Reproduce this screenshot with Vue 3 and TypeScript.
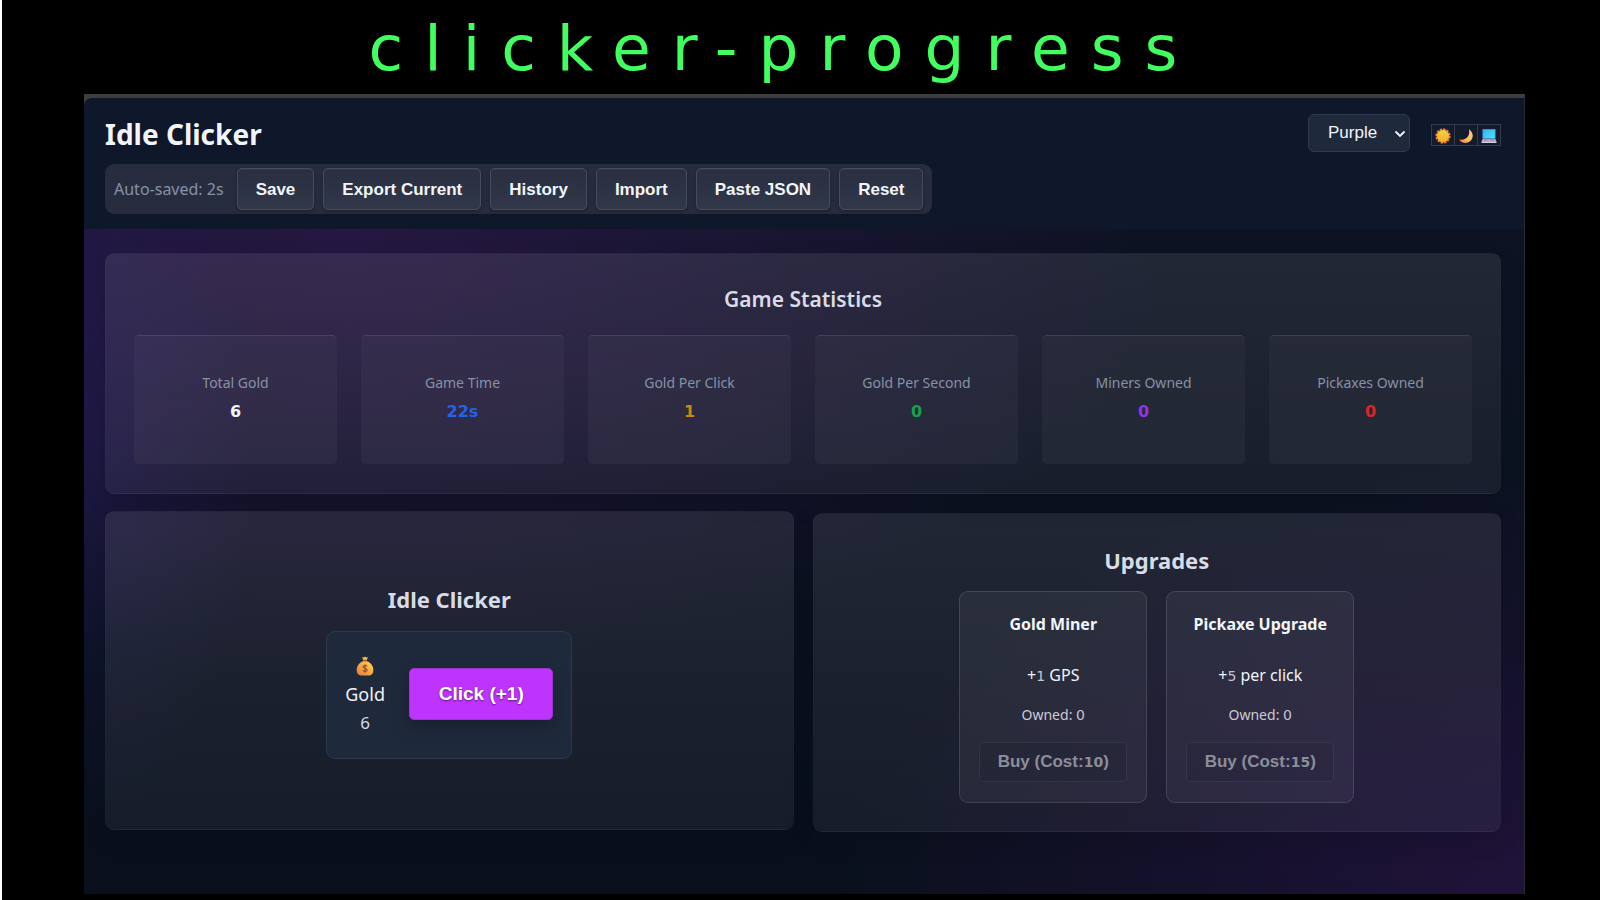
<script setup lang="ts">
import { ref } from 'vue'

interface Stat {
  label: string
  value: string
  tone: string
}

interface Upgrade {
  name: string
  amount: number
  unit: string
  owned: number
  cost: number
}

const gold = ref(6)
const perClick = ref(1)
const accent = ref('Purple')

const actions: string[] = ['Save', 'Export Current', 'History', 'Import', 'Paste JSON', 'Reset']

const stats: Stat[] = [
  { label: 'Total Gold', value: '6', tone: 'white' },
  { label: 'Game Time', value: '22s', tone: 'blue' },
  { label: 'Gold Per Click', value: '1', tone: 'amber' },
  { label: 'Gold Per Second', value: '0', tone: 'green' },
  { label: 'Miners Owned', value: '0', tone: 'purple' },
  { label: 'Pickaxes Owned', value: '0', tone: 'red' },
]

const upgrades: Upgrade[] = [
  { name: 'Gold Miner', amount: 1, unit: 'GPS', owned: 0, cost: 10 },
  { name: 'Pickaxe Upgrade', amount: 5, unit: 'per click', owned: 0, cost: 15 },
]

function collect(): void {
  gold.value += perClick.value
}
</script>

<template>
  <div class="stage">
    <h1 class="banner">clicker-progress</h1>
    <div class="window">
      <header class="top">
        <div class="brand-row">
          <h2 class="brand">Idle Clicker</h2>
          <div class="prefs">
            <div class="select-wrap">
              <select v-model="accent" class="accent" aria-label="Accent colour">
                <option>Purple</option>
                <option>Blue</option>
                <option>Green</option>
              </select>
              <svg class="chevron" viewBox="0 0 12 8" aria-hidden="true">
                <path d="M1.500 1.500 6 6l4.500-4.500" fill="none" stroke="currentColor" stroke-width="1.800" />
              </svg>
            </div>
            <div class="modes">
              <button class="mode" type="button" aria-label="Light">
                <svg viewBox="0 0 18 18" aria-hidden="true">
                  <defs>
                    <linearGradient id="sun" x1="0" y1="0" x2="0" y2="1">
                      <stop offset="0" stop-color="#f9cf45" />
                      <stop offset="1" stop-color="#f2b02e" />
                    </linearGradient>
                  </defs>
                  <circle cx="9" cy="9" r="7.600" fill="none" stroke="#ee8430" stroke-width="2" stroke-dasharray="2.600 1.380" />
                  <circle cx="9" cy="9" r="7.300" fill="#ee8c30" />
                  <circle cx="9" cy="9" r="6.400" fill="url(#sun)" />
                </svg>
              </button>
              <button class="mode" type="button" aria-label="Dark">
                <svg viewBox="0 0 18 18" aria-hidden="true">
                  <defs>
                    <linearGradient id="moon" x1="1" y1="0" x2="0" y2="1">
                      <stop offset="0" stop-color="#ffd57a" />
                      <stop offset="0.600" stop-color="#fbb95c" />
                      <stop offset="1" stop-color="#e9723d" />
                    </linearGradient>
                  </defs>
                  <path d="M12.300 1.500c5.200 3.300 5.600 9.700 1.600 13.200-4 3.500-10.200 2.500-12.700-1.800 4.200 1 8-.4 9.900-3.200 1.700-2.500 2-5.300 1.200-8.200z" fill="url(#moon)" />
                </svg>
              </button>
              <button class="mode" type="button" aria-label="System">
                <svg viewBox="0 0 18 18" aria-hidden="true">
                  <defs>
                    <linearGradient id="screen" x1="0" y1="0" x2="1" y2="1">
                      <stop offset="0" stop-color="#35b4f4" />
                      <stop offset="1" stop-color="#4ee0fb" />
                    </linearGradient>
                  </defs>
                  <rect x="1.500" y="1" width="15" height="11" rx="1" fill="#2b8fdc" />
                  <rect x="2.500" y="2" width="13" height="9.500" fill="url(#screen)" />
                  <path d="M2 12h14l1.500 3.500h-17z" fill="#b9b3c9" />
                  <path d="M3.500 13h11M3 14.300h3.500m5 0H15" stroke="#8b86a0" stroke-width=".8" />
                  <rect x=".5" y="15.300" width="17" height="1.700" rx=".7" fill="#d4cfe2" />
                </svg>
              </button>
            </div>
          </div>
        </div>
        <nav class="toolbar" aria-label="Game data">
          <span class="saved">Auto-saved: 2s</span>
          <button v-for="action in actions" :key="action" class="tool" type="button">{{ action }}</button>
        </nav>
      </header>

      <main class="board">
        <section class="panel stats-panel">
          <h3 class="heading light">Game Statistics</h3>
          <div class="stats">
            <div v-for="stat in stats" :key="stat.label" class="stat">
              <span class="stat-label">{{ stat.label }}</span>
              <span class="stat-value" :class="stat.tone">{{ stat.value }}</span>
            </div>
          </div>
        </section>

        <div class="columns">
          <section class="panel clicker-panel">
            <h3 class="heading">Idle Clicker</h3>
            <div class="clicker">
              <div class="purse">
                <svg class="bag" viewBox="0 0 18 20" aria-hidden="true">
                  <defs>
                    <linearGradient id="bag" x1="1" y1="0" x2="0" y2="1">
                      <stop offset="0" stop-color="#ffd65c" />
                      <stop offset="0.500" stop-color="#f7a945" />
                      <stop offset="1" stop-color="#e27a3c" />
                    </linearGradient>
                  </defs>
                  <path d="M6 1.200 7.700 1.600 9 .5l1.300 1.100L12 1.200 10.800 4H7.200z" fill="#f9b94b" />
                  <rect x="6.800" y="3.700" width="4.400" height="1.600" rx=".8" fill="#a8552e" />
                  <path d="M7 5.200h4c3.500 1.300 6.300 4.700 6.300 8.500 0 4.200-2 5.800-5 5.800H5.700c-3 0-5-1.600-5-5.800C.7 9.900 3.500 6.500 7 5.200z" fill="url(#bag)" />
                  <path d="M11.200 10.300c-.5-1-3.900-1.300-4.200.4-.3 1.900 4.200 1.200 4.200 3.200 0 1.800-3.700 1.700-4.500.3M9 8.200v8.500" fill="none" stroke="#8a4a2b" stroke-width="1.100" />
                </svg>
                <span class="purse-label">Gold</span>
                <span class="purse-count">{{ gold }}</span>
              </div>
              <button class="click" type="button" @click="collect">Click (+{{ perClick }})</button>
            </div>
          </section>

          <section class="panel upgrades-panel">
            <h3 class="heading">Upgrades</h3>
            <div class="upgrades">
              <article v-for="item in upgrades" :key="item.name" class="upgrade">
                <h4 class="upgrade-name">{{ item.name }}</h4>
                <p class="effect">+<span class="num">{{ item.amount }}</span> {{ item.unit }}</p>
                <p class="owned">Owned: <span class="num">{{ item.owned }}</span></p>
                <button class="buy" type="button" disabled>Buy (Cost:<span class="num">{{ item.cost }}</span>)</button>
              </article>
            </div>
          </section>
        </div>
      </main>
    </div>
  </div>
</template>

<style>
body {
  margin: 0;
  background: #000;
}
</style>

<style scoped>
.stage {
  box-sizing: border-box;
  min-height: 100vh;
  display: flex;
  flex-direction: column;
  padding: 0 75px 6px 82px;
  border-left: 2px solid #fff;
  background: #000;
  font-family: "Noto Sans", "Open Sans", sans-serif;
  color: #f1f5f9;
}

.banner {
  margin: 0;
  padding: 4px 42px 0 0;
  font: 400 63px/90px "DejaVu Sans", sans-serif;
  letter-spacing: 21px;
  text-align: center;
  color: #41ff5f;
}

.window {
  flex: 1;
  display: flex;
  flex-direction: column;
  border-top: 4px solid #3e3e3e;
  border-right: 1px solid #2b2c33;
  background: #3e3e3e;
}

.top {
  padding: 16px 23px 15px 21px;
  border-radius: 8px 0 0 0;
  background: #0f172a;
}

.brand-row {
  display: flex;
  justify-content: space-between;
  align-items: flex-start;
  height: 50px;
}

.brand {
  margin: 0;
  font-size: 28px;
  line-height: 40px;
  font-weight: 700;
}

.prefs {
  display: flex;
  align-items: center;
  gap: 21px;
}

.select-wrap {
  position: relative;
}

.accent {
  appearance: none;
  box-sizing: border-box;
  width: 102px;
  height: 38px;
  padding: 0 0 0 19px;
  border: 1px solid #2e3a4e;
  border-radius: 6px;
  background: #1e293b;
  color: #f1f5f9;
  font: 400 17px/20px "Liberation Sans", Arial, sans-serif;
}

.chevron {
  position: absolute;
  right: 4px;
  top: 16px;
  width: 12px;
  height: 8px;
  pointer-events: none;
}

.modes {
  display: flex;
  padding-top: 4px;
}

.mode {
  box-sizing: border-box;
  width: 24px;
  height: 22px;
  margin-right: -1px;
  padding: 2px 3px 0;
  border: 1px solid #333c4d;
  background: #141b2d;
}

.mode:last-child {
  margin-right: 0;
}

.mode svg {
  display: block;
  width: 16px;
  height: 18px;
}

.toolbar {
  display: flex;
  align-items: center;
  gap: 9px;
  width: max-content;
  padding: 4px 9px;
  border-radius: 9px;
  background: #272d3f;
}

.saved {
  margin-right: 4px;
  font-size: 16px;
  line-height: 24px;
  color: #8592a6;
}

.tool {
  box-sizing: border-box;
  height: 42px;
  padding: 2px 18px 0;
  border: 1px solid #464c5b;
  border-radius: 5px;
  background: linear-gradient(#292e40, #31384a);
  box-shadow: 0 2px 4px rgba(0, 0, 0, 0.25), inset 0 1px 0 rgba(255, 255, 255, 0.06);
  color: #f1f5f9;
  font: 700 17px/20px "Liberation Sans", Arial, sans-serif;
}

.board {
  flex: 1;
  display: flex;
  flex-direction: column;
  gap: 19px;
  padding: 24px 23px 62px 21px;
  background:
    radial-gradient(ellipse 58% 68% at 18% 0%, rgba(100, 35, 150, 0.28), transparent),
    radial-gradient(ellipse 48% 65% at 100% 100%, rgba(90, 25, 135, 0.28), transparent),
    radial-gradient(ellipse 12% 60% at 0% 30%, rgba(50, 40, 140, 0.22), transparent),
    linear-gradient(#0d1322, #09101c);
}

.panel {
  box-sizing: border-box;
  border: 1px solid rgba(255, 255, 255, 0.02);
  border-radius: 9px;
  background: linear-gradient(rgba(255, 248, 255, 0.09), rgba(255, 248, 255, 0.055));
  box-shadow: 0 8px 24px rgba(0, 0, 0, 0.12);
}

.heading {
  margin: 0;
  font-size: 22px;
  line-height: 32px;
  font-weight: 700;
  text-align: center;
  color: #d9dce4;
}

.heading.light {
  font-size: 21px;
  font-weight: 600;
}

.stats-panel {
  padding: 29px 28px;
}

.stats {
  display: grid;
  grid-template-columns: repeat(6, 1fr);
  gap: 24px;
  margin-top: 20px;
}

.stat {
  box-sizing: border-box;
  height: 129px;
  display: flex;
  flex-direction: column;
  align-items: center;
  padding-top: 35px;
  border-radius: 5px;
  border-top: 1px solid rgba(255, 255, 255, 0.09);
  background: linear-gradient(rgba(255, 255, 255, 0.03), rgba(255, 255, 255, 0.045));
}

.stat-label {
  font-size: 14px;
  line-height: 24px;
  color: #8592a6;
}

.stat-value {
  margin-top: 5px;
  font: 700 16px/24px "DejaVu Sans", sans-serif;
}

.white { color: #f1f5f9; }
.blue { color: #2563eb; }
.amber { color: #ca8a04; }
.green { color: #16a34a; }
.purple { color: #9333ea; }
.red { color: #dc2626; }

.columns {
  flex: 1;
  display: grid;
  grid-template-columns: 1fr 1fr;
  gap: 19px;
}

.clicker-panel {
  margin: -2px 0 2px;
  display: flex;
  flex-direction: column;
  align-items: center;
  padding-top: 71px;
}

.clicker {
  box-sizing: border-box;
  width: 246px;
  height: 128px;
  display: flex;
  align-items: center;
  justify-content: space-between;
  margin-top: 16px;
  padding: 0 18px 3px;
  border: 1px solid #2e3a4c;
  border-radius: 9px;
  background: #1e293b;
}

.purse {
  display: flex;
  flex-direction: column;
  align-items: center;
  padding-top: 6px;
}

.bag {
  width: 18px;
  height: 20px;
}

.purse-label {
  margin-top: 4px;
  font-size: 18px;
  line-height: 28px;
}

.purse-count {
  font-size: 17px;
  line-height: 30px;
  color: #d5dae2;
}

.click {
  width: 144px;
  height: 52px;
  padding: 0;
  border: 1px solid #9c33d0;
  border-radius: 5px;
  background: #bf33ff;
  box-shadow: 0 8px 18px rgba(0, 0, 0, 0.22);
  color: #fff;
  font: 700 19px/24px "Liberation Sans", Arial, sans-serif;
  text-shadow: 0 1px 2px rgba(0, 0, 0, 0.5);
}

.upgrades-panel {
  padding-top: 30px;
}

.upgrades {
  display: flex;
  justify-content: center;
  gap: 19px;
  margin-top: 15px;
}

.upgrade {
  box-sizing: border-box;
  width: 188px;
  height: 212px;
  display: flex;
  flex-direction: column;
  align-items: center;
  padding-top: 20px;
  border: 1px solid rgba(255, 255, 255, 0.12);
  border-radius: 9px;
  background: rgba(255, 255, 255, 0.05);
}

.upgrade-name {
  margin: 0;
  font-size: 16px;
  line-height: 24px;
  font-weight: 700;
}

.effect {
  margin: 27px 0 0;
  font-size: 16px;
  line-height: 24px;
}

.owned {
  margin: 15px 0 0;
  font-size: 14px;
  line-height: 24px;
  color: #c8ccd6;
}

.num {
  font-family: "DejaVu Sans", sans-serif;
  font-size: 14px;
  color: #c0c5cf;
}

.buy {
  box-sizing: border-box;
  width: 148px;
  height: 40px;
  margin-top: 15px;
  padding: 0;
  border: 1px solid rgba(255, 255, 255, 0.07);
  border-radius: 5px;
  background: rgba(10, 15, 30, 0.1);
  color: #8b8e99;
  font: 700 17px/20px "Liberation Sans", Arial, sans-serif;
}

.buy .num {
  color: inherit;
}
</style>
